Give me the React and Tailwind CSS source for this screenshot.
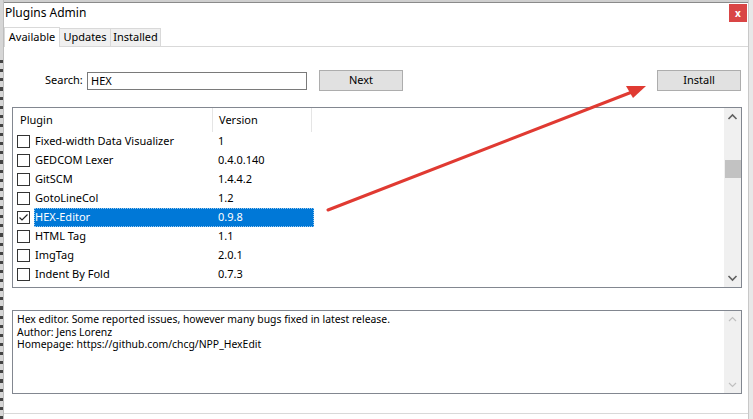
import React from "react";

const rows = [
  ["Fixed-width Data Visualizer", "1"],
  ["GEDCOM Lexer", "0.4.0.140"],
  ["GitSCM", "1.4.4.2"],
  ["GotoLineCol", "1.2"],
  ["HEX-Editor", "0.9.8", true],
  ["HTML Tag", "1.1"],
  ["ImgTag", "2.0.1"],
  ["Indent By Fold", "0.7.3"],
  ["", ""],
];

function Check({ checked }) {
  return (
    <div className="w-[13px] h-[13px] border border-[#333] bg-white flex items-center justify-center shrink-0">
      {checked && (
        <svg width="11" height="11" viewBox="0 0 11 11">
          <path d="M1.5 5.5 L4 8 L9.5 2.5" fill="none" stroke="#222" strokeWidth="1.2" />
        </svg>
      )}
    </div>
  );
}

export default function App() {
  return (
    <div
      className="relative w-[753px] h-[419px] bg-white overflow-hidden flex text-black"
      style={{ fontFamily: '"Noto Sans", "Open Sans", sans-serif' }}
    >
      {/* left strip (background window) */}
      <div className="w-[4px] h-full bg-[#d6d6d6] border-r border-[#bdbdbd] flex flex-col gap-[6px] pt-[60px]">
        {Array.from({ length: 40 }).map((_, i) => (
          <div key={i} className="w-[3px] h-[4px] bg-[#444]" />
        ))}
      </div>
      <div className="flex-1 flex flex-col">
        <div className="h-[3px] bg-[#cfcfcf] border-b border-[#8a8a8a]" />
        {/* title */}
        <div className="h-[24px] flex items-start justify-between pl-[1px]">
          <span className="text-[12px] leading-none mt-[4px]">Plugins Admin</span>
          <div className="w-[18px] h-[18px] bg-[#d94545] mt-[1px] mr-[1px] flex items-center justify-center text-white text-[10px] font-bold leading-none">
            x
          </div>
        </div>
        {/* tabs */}
        <div className="flex items-end h-[20px] border-b border-[#d9d9d9]">
          <div className="h-[20px] w-[56px] bg-white border border-b-0 border-[#d9d9d9] text-[11px] flex items-center justify-center -mb-px">
            Available
          </div>
          <div className="h-[18px] w-[51px] bg-[#f0f0f0] border border-l-0 border-b-0 border-[#d9d9d9] text-[11px] flex items-center justify-center">
            Updates
          </div>
          <div className="h-[18px] w-[50px] bg-[#f0f0f0] border border-l-0 border-b-0 border-[#d9d9d9] text-[11px] flex items-center justify-center">
            Installed
          </div>
        </div>
        {/* panel */}
        <div className="flex-1 flex flex-col pl-[8px] pr-[6px] border-b border-[#d9d9d9] mb-[5px]">
          <div className="flex items-center h-[21px] mt-[23px]">
            <span className="text-[11px] ml-[33px] w-[38px]">Search:</span>
            <div className="ml-[4px] w-[220px] h-[18px] border border-[#7a7a7a] text-[11px] flex items-center pl-[3px] leading-none">
              HEX
            </div>
            <div className="ml-[12px] w-[84px] h-[21px] bg-[#e1e1e1] border border-[#adadad] text-[11px] flex items-center justify-center">
              Next
            </div>
            <div className="ml-auto mr-[1px] w-[84px] h-[21px] bg-[#e1e1e1] border border-[#adadad] text-[11px] flex items-center justify-center">
              Install
            </div>
          </div>
          {/* list */}
          <div className="mt-[16px] w-[730px] h-[181px] border border-[#828790] flex overflow-hidden">
            <div className="flex-1 flex flex-col overflow-hidden">
              <div className="h-[24px] flex shrink-0 text-[11px]">
                <div className="w-[200px] border-r border-[#e5e5e5] pl-[7px] flex items-center">Plugin</div>
                <div className="w-[99px] border-r border-[#e5e5e5] pl-[6px] flex items-center">Version</div>
              </div>
              {rows.map(([name, ver, sel], i) => (
                <div key={i} className="h-[19px] flex items-center shrink-0 text-[11px]">
                  <div className="w-[21px] pl-[4px] flex items-center">
                    <Check checked={sel} />
                  </div>
                  <div
                    className={`flex h-[19px] items-center w-[280px] ${
                      sel ? "bg-[#0078d7] text-white outline outline-1 outline-dotted outline-[#99c9ef] -outline-offset-1" : ""
                    }`}
                  >
                    <span className="w-[184px] pl-[1px]">{name}</span>
                    <span>{ver}</span>
                  </div>
                </div>
              ))}
            </div>
            <div className="w-[17px] bg-[#f0f0f0] flex flex-col items-center">
              <svg width="17" height="17" viewBox="0 0 17 17" className="mt-[1px]">
                <path d="M4.5 10 L8.5 6 L12.5 10" fill="none" stroke="#606060" strokeWidth="1.6" />
              </svg>
              <div className="mt-[34px] w-[16px] h-[18px] bg-[#c2c2c2]" />
              <div className="flex-1" />
              <svg width="17" height="17" viewBox="0 0 17 17" className="mb-[1px]">
                <path d="M4.5 7 L8.5 11 L12.5 7" fill="none" stroke="#606060" strokeWidth="1.6" />
              </svg>
            </div>
          </div>
          {/* description */}
          <div className="mt-[22px] w-[730px] h-[84px] border border-[#828790] flex">
            <div className="flex-1 pl-[4px] pt-[2px] text-[10.4px] leading-[12.5px]">
              <div>Hex editor. Some reported issues, however many bugs fixed in latest release.</div>
              <div>Author: Jens Lorenz</div>
              <div>Homepage: https://github.com/chcg/NPP_HexEdit</div>
            </div>
            <div className="w-[17px] bg-[#f0f0f0] flex flex-col items-center justify-between">
              <svg width="17" height="17" viewBox="0 0 17 17">
                <path d="M5 10 L8.5 6.5 L12 10" fill="none" stroke="#c0c0c0" strokeWidth="1.2" />
              </svg>
              <svg width="17" height="17" viewBox="0 0 17 17">
                <path d="M5 7 L8.5 10.5 L12 7" fill="none" stroke="#c0c0c0" strokeWidth="1.2" />
              </svg>
            </div>
          </div>
        </div>
      </div>
      {/* right strip */}
      <div className="w-[5px] h-full bg-[#e8e8e8] border-l border-[#c8c8c8]" />
      {/* annotation arrow */}
      <svg className="absolute left-0 top-0 pointer-events-none" width="753" height="419">
        <line x1="328" y1="210" x2="632" y2="92" stroke="#e03a32" strokeWidth="3" strokeLinecap="round" />
        <polygon points="646,86 626,86 633,98" fill="#e03a32" />
      </svg>
    </div>
  );
}
